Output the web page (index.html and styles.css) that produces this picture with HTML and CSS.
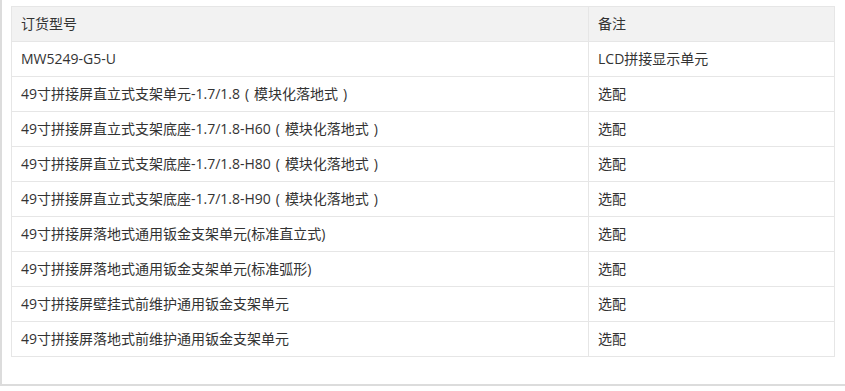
FILE: index.html
```html
<!DOCTYPE html>
<html lang="zh-CN">
<head>
<meta charset="utf-8">
<title>订货型号</title>
<link rel="stylesheet" href="styles.css">
</head>
<body>
<div class="panel">
  <table class="spec-table">
    <colgroup>
      <col class="col-model">
      <col class="col-note">
    </colgroup>
    <thead>
      <tr><th>订货型号</th><th>备注</th></tr>
    </thead>
    <tbody>
      <tr><td>MW5249-G5-U</td><td>LCD拼接显示单元</td></tr>
      <tr><td>49寸拼接屏直立式支架单元-1.7/1.8<span class="fw">(</span>模块化落地式<span class="fw">)</span></td><td>选配</td></tr>
      <tr><td>49寸拼接屏直立式支架底座-1.7/1.8-H60<span class="fw">(</span>模块化落地式<span class="fw">)</span></td><td>选配</td></tr>
      <tr><td>49寸拼接屏直立式支架底座-1.7/1.8-H80<span class="fw">(</span>模块化落地式<span class="fw">)</span></td><td>选配</td></tr>
      <tr><td>49寸拼接屏直立式支架底座-1.7/1.8-H90<span class="fw">(</span>模块化落地式<span class="fw">)</span></td><td>选配</td></tr>
      <tr><td>49寸拼接屏落地式通用钣金支架单元(标准直立式)</td><td>选配</td></tr>
      <tr><td>49寸拼接屏落地式通用钣金支架单元(标准弧形)</td><td>选配</td></tr>
      <tr><td>49寸拼接屏壁挂式前维护通用钣金支架单元</td><td>选配</td></tr>
      <tr><td>49寸拼接屏落地式前维护通用钣金支架单元</td><td>选配</td></tr>
    </tbody>
  </table>
</div>
</body>
</html>
```

FILE: styles.css
```css
html, body {
  margin: 0;
  padding: 0;
  background: #ffffff;
}

body {
  font-family: "Open Sans", "Noto Sans CJK SC", sans-serif;
  font-size: 14px;
  color: #333333;
}

.panel {
  border-left: 2px solid #dcdcdc;
  border-bottom: 2px solid #dcdcdc;
  padding: 6px 10px 27px 9px;
}

.spec-table {
  width: 100%;
  border-collapse: collapse;
  table-layout: fixed;
}

.col-model {
  width: 577px;
}

.spec-table th,
.spec-table td {
  border: 1px solid #e6e6e6;
  padding: 7px 9px;
  line-height: 20px;
  font-size: 14px;
  font-weight: normal;
  text-align: left;
  white-space: nowrap;
}

.spec-table th {
  background: #f2f2f2;
}

.fw {
  display: inline-block;
  width: 1em;
  text-align: center;
}
```
